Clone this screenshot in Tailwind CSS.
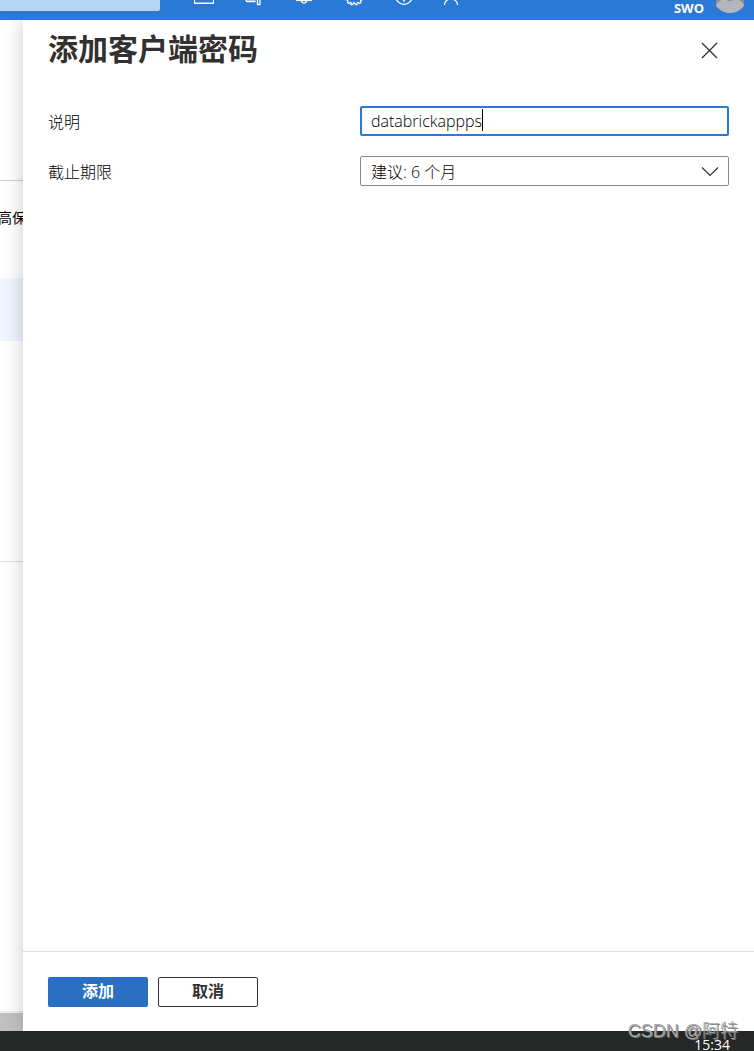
<!DOCTYPE html>
<html lang="zh-CN">

<head>
    <meta charset="UTF-8">
    <title>添加客户端密码</title>
    <meta name="viewport" content="width=device-width, initial-scale=1.0">

    <script src="https://cdn.jsdelivr.net/npm/@tailwindcss/browser@4"></script>
</head>

<body class="h-screen flex flex-col overflow-hidden bg-white text-[#323130] font-['Open_Sans','Noto_Sans_CJK_SC',sans-serif]">
    <header class="h-5 shrink-0 flex items-start overflow-hidden bg-[#2b79d7] text-white">
        <div class="w-40 h-[11px] shrink-0 rounded-br-xs bg-[#b5d5f3]"></div>
        <nav class="flex ml-[29px] gap-5">
            <button type="button" title="Cloud Shell">
                <svg class="w-[30px] h-5" viewBox="0 0 30 20" fill="none" stroke="currentColor">
                    <path d="M5.500-9v12.500h19v-12.500" />
                    <path d="M6 2.500h18" opacity=".5" />
                </svg>
            </button>
            <button type="button" title="目录 + 订阅">
                <svg class="w-[30px] h-5" viewBox="0 0 30 20" fill="none" stroke="currentColor">
                    <path d="M7-2v2q0 1.500 1.500 1.500h8M8.500-.500h9" stroke-width="1.400" />
                    <path d="M18.500-3v7.500h2.500v-7.500" stroke-width="1.300" />
                </svg>
            </button>
            <button type="button" title="通知">
                <svg class="w-[30px] h-5" viewBox="0 0 30 20" fill="none" stroke="currentColor">
                    <path d="M7 .300h16" stroke-width="1.600" />
                    <path d="M12.500 1q.500 2.200 2.500 2.200t2.500-2.200" stroke-width="1.300" />
                </svg>
            </button>
            <button type="button" title="设置">
                <svg class="w-[30px] h-5" viewBox="0 0 30 20" fill="none" stroke="currentColor" stroke-width="1.200">
                    <path d="M6.500 0h2l.500 1-.500 1.500 1.500 1 1.500-1 1 .500-.500 1.700h1.500l1.500-2.200 1.500 2.200h1.500v-1.700l1-.500 1.500 1 1.500-1-.500-1.500.500-1h2" />
                </svg>
            </button>
            <button type="button" title="帮助">
                <svg class="w-[30px] h-5" viewBox="0 0 30 20" fill="none" stroke="currentColor">
                    <circle cx="15" cy="-4" r="8.300" stroke-width="1.300" />
                    <path d="M15-1v2.500" stroke-width="1.800" />
                </svg>
            </button>
            <button type="button" title="反馈">
                <svg class="w-[30px] h-5" viewBox="0 0 30 20" fill="none" stroke="currentColor">
                    <path d="M5.500 5q0-4 4-5.500q2.500-1 5 0q4 1.500 4 5.500" stroke-width="1.300" />
                </svg>
            </button>
        </nav>
        <div class="ml-auto mr-2.5 flex">
            <span class="text-[13px] leading-4 font-bold">SWO</span>
            <svg class="ml-3 w-7 h-5" viewBox="0 0 28 20">
                <clipPath id="avatar">
                    <circle cx="14" cy="-4" r="17" />
                </clipPath>
                <g clip-path="url(#avatar)">
                    <path d="M0-20h28v40h-28z" fill="#8a919b" />
                    <ellipse cx="14" cy="7" rx="14" ry="9" fill="#b3b6bb" />
                    <ellipse cx="14" cy="-3" rx="5" ry="4" fill="#7c8da6" />
                </g>
            </svg>
        </div>
    </header>

    <main class="flex-1 min-h-0 flex">
        <div class="w-[23px] shrink-0 flex flex-col overflow-hidden bg-white">
            <div class="h-[161px] shrink-0 border-b border-[#d1d1d1]"></div>
            <div class="h-[97px] shrink-0 pt-[25px]">
                <p class="-ml-0.5 whitespace-nowrap text-sm leading-6 text-black">高保</p>
            </div>
            <div class="h-[63px] shrink-0 bg-[#f0f5ff]"></div>
            <div class="h-[221px] shrink-0 border-b border-[#e1e1e1]"></div>
            <div class="mt-auto h-5 shrink-0 border-t-2 border-[#eeeeee] bg-[#c1c1c1]"></div>
        </div>

        <section class="relative flex-1 min-w-0 flex flex-col bg-white shadow-[0_0_18px_rgba(0,0,0,0.22)] [clip-path:inset(0_0_0_-23px)]">
            <div class="flex items-start justify-between pl-[25px] pr-9">
                <h1 class="text-[30px] leading-[58px] font-bold">添加客户端密码</h1>
                <button type="button" title="关闭" class="mt-[22px]">
                    <svg class="size-[17px]" viewBox="0 0 17 17" fill="none" stroke="currentColor" stroke-width="1.300">
                        <path d="M1 1l15 15M16 1l-15 15" />
                    </svg>
                </button>
            </div>

            <form id="secretForm" class="flex-1 pt-7 px-[25px] flex flex-col gap-5 text-base">
                <div class="flex items-center">
                    <label for="description" class="w-[312px] shrink-0 pt-0.5 leading-6 font-light text-black">说明</label>
                    <div class="relative flex-1">
                        <input id="description" type="text" value="databrickappps" class="
                            block
                            w-full
                            h-[30px]
                            px-[9px]
                            rounded-xs
                            border-2
                            border-[#2b79d7]
                            text-base
                            font-light
                            text-black
                            outline-none">
                        <span class="absolute left-[122px] top-[3px] h-[22px] w-px bg-black"></span>
                    </div>
                </div>
                <div class="flex items-center">
                    <label for="expires" class="w-[312px] shrink-0 pt-0.5 leading-6 font-light text-black">截止期限</label>
                    <div class="relative flex-1">
                        <select id="expires" class="
                            block
                            w-full
                            h-[30px]
                            px-2.5
                            pt-0.5
                            appearance-none
                            rounded-xs
                            border
                            border-[#8a8886]
                            bg-white
                            font-light
                            text-black">
                            <option>建议: 6 个月</option>
                        </select>
                        <svg class="absolute right-2.5 top-2.5 w-[18px] h-[11px] pointer-events-none" viewBox="0 0 18 11" fill="none" stroke="currentColor" stroke-width="1.200">
                            <path d="M1 1.500l8 8 8-8" />
                        </svg>
                    </div>
                </div>
            </form>

            <div class="flex gap-2.5 pt-[25px] pb-6 px-[25px] border-t border-[#dddddd]">
                <button type="submit" form="secretForm" class="w-[100px] h-[30px] pb-0.5 rounded-xs bg-[#2a6fc2] text-white text-base leading-6 font-bold">添加</button>
                <button type="button" class="w-[100px] h-[30px] pb-0.5 rounded-xs border border-[#323130] text-base leading-6 font-bold">取消</button>
            </div>
        </section>
    </main>

    <footer class="relative h-5 shrink-0 flex justify-end bg-[#262828] pr-6 text-white">
        <time class="mt-1 text-sm leading-5">15:34</time>
        <p class="absolute right-4 -top-3 whitespace-nowrap text-lg leading-6 text-[#a8a8a8] font-['Liberation_Sans','Noto_Sans_CJK_SC',sans-serif] font-light text-shadow-[1px_1px_0_#777777]">CSDN @阿特</p>
    </footer>

    <script>
        document.getElementById("secretForm").addEventListener("submit", (event) => {
            event.preventDefault();
        });
    </script>
</body>

</html>
